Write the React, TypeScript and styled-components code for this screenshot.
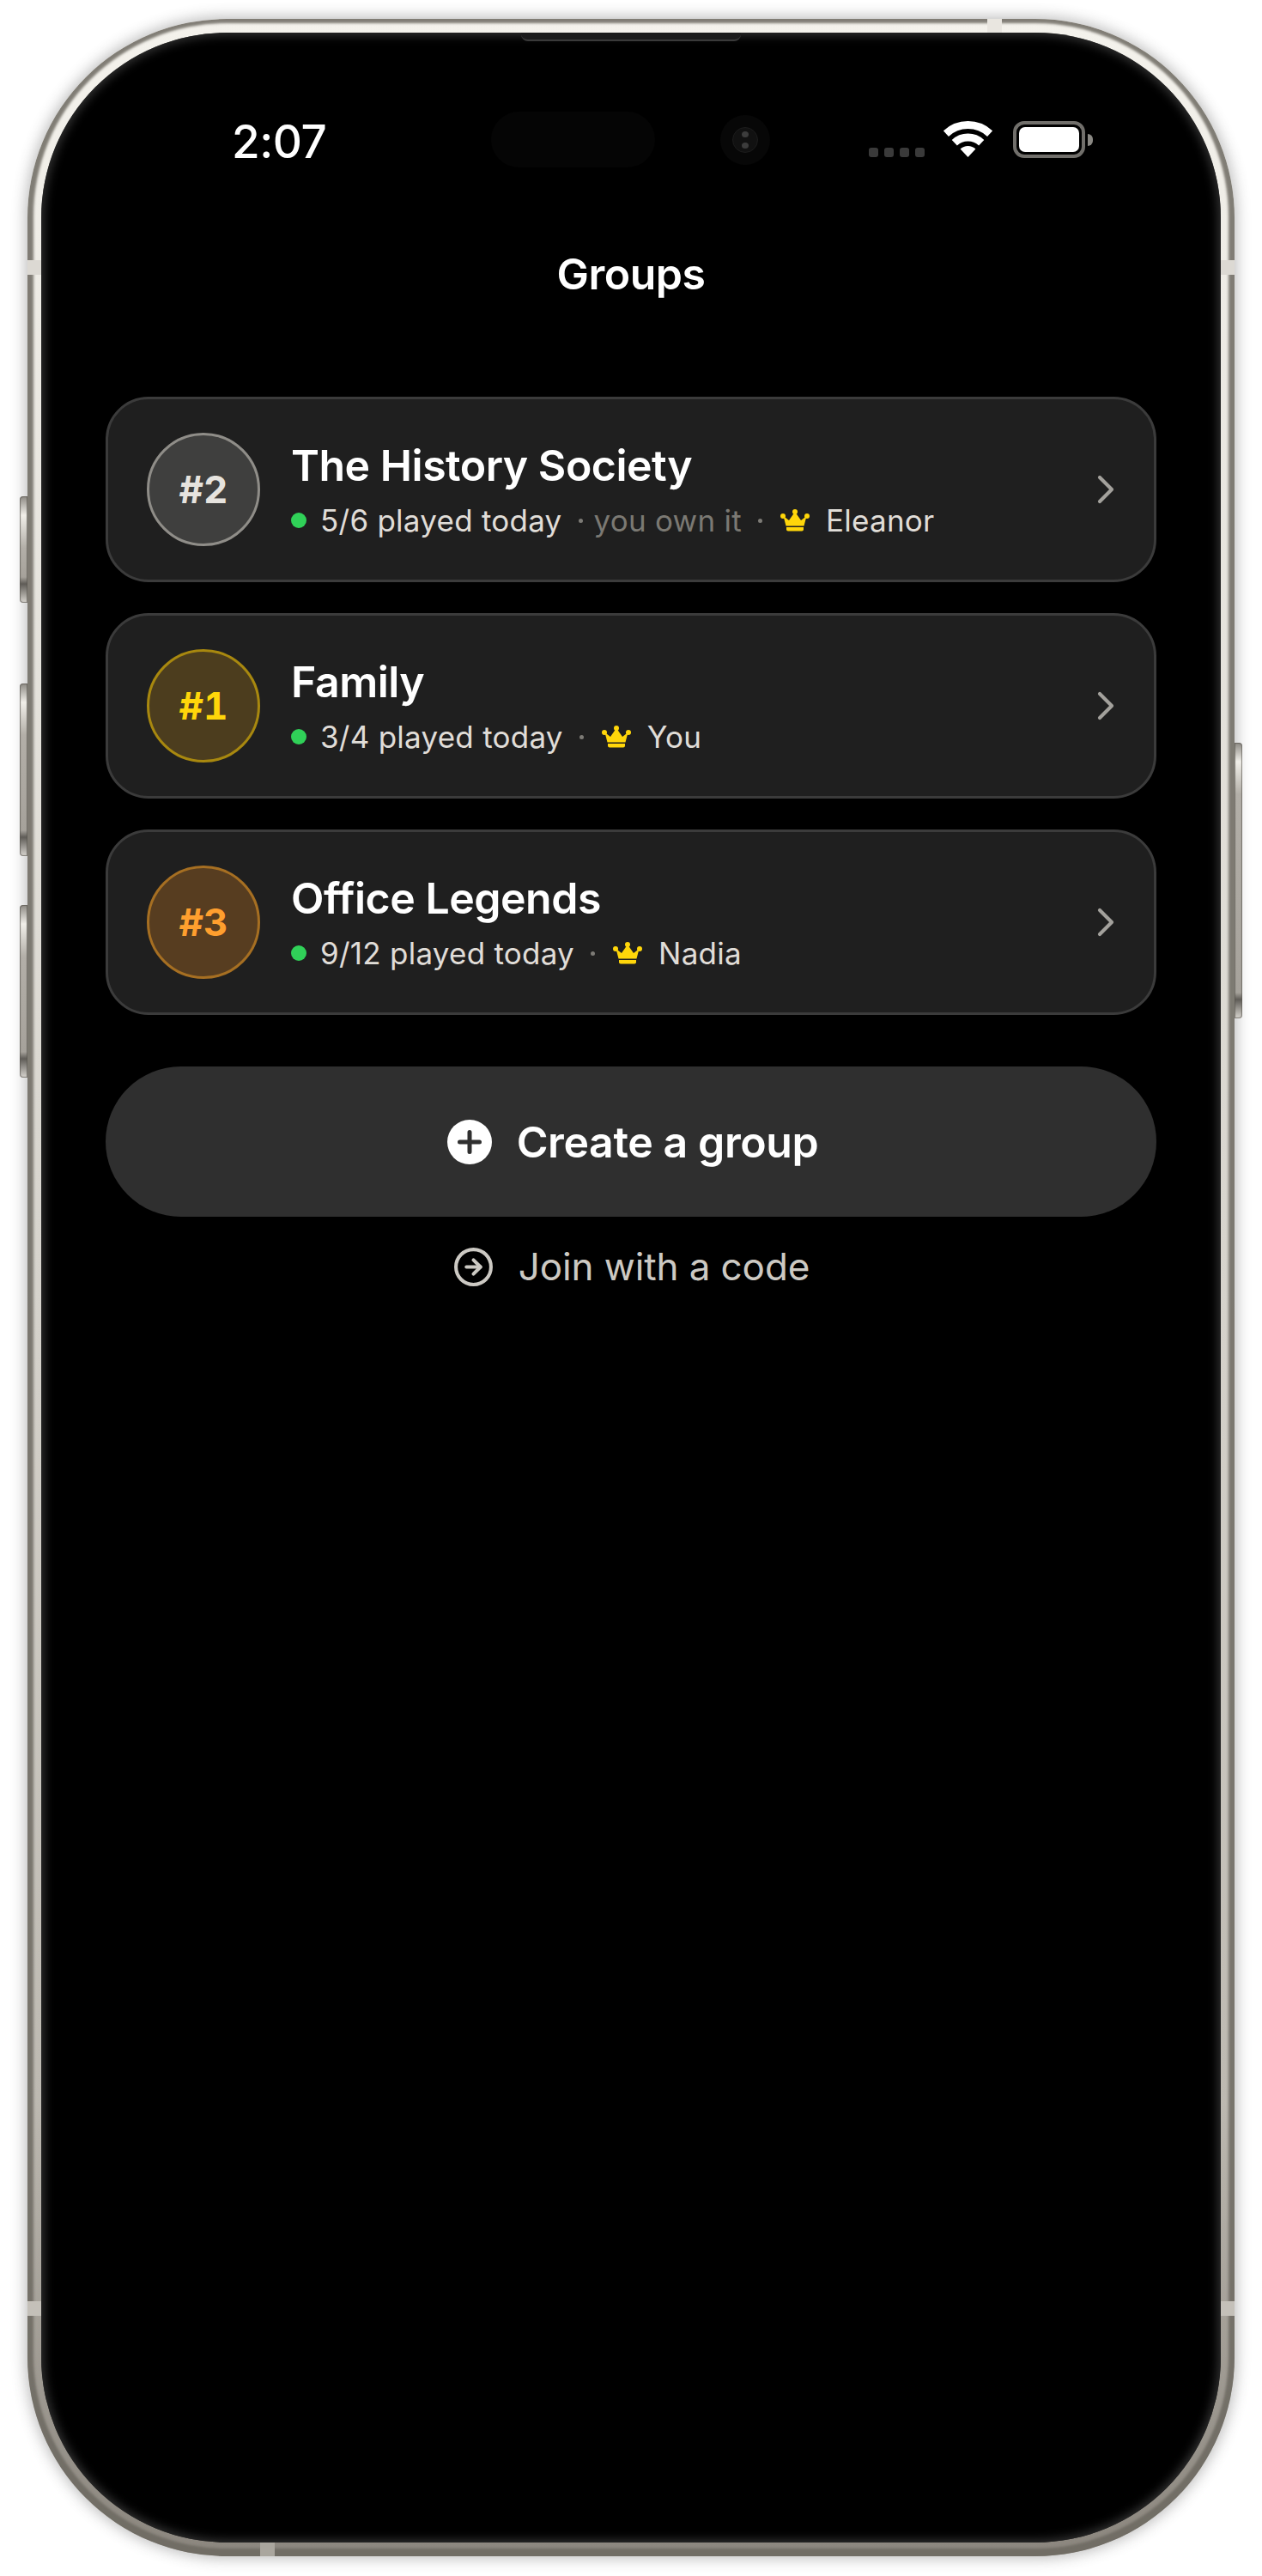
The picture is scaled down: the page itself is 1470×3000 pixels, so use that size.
import styled, { createGlobalStyle } from 'styled-components'
import { ChevronRight, CircleArrowRight } from 'lucide-react'

const GlobalStyle = createGlobalStyle`
  html, body {
    margin: 0;
    background: #fff;
  }
  * {
    box-sizing: border-box;
  }
`

const Page = styled.div`
  height: 3000px;
  padding: 22px 32px 0;
  font-family: 'Inter', 'Liberation Sans', sans-serif;
`

const Phone = styled.div`
  position: relative;
  width: 1406px;
  height: 2955px;
  padding: 16px;
  border-radius: 232px;
  background: linear-gradient(180deg, #f4f2ec 0%, #d6d3cc 50%, #bdb9b1 82%, #8b867e 100%);
  box-shadow:
    0 0 16px 3px rgba(60, 60, 60, 0.32),
    inset 0 -2px 3px 7px rgba(108, 104, 96, 0.85);
`

const SideButton = styled.div<{ $side: 'left' | 'right'; $top: number; $height: number }>`
  position: absolute;
  top: ${(p) => p.$top}px;
  height: ${(p) => p.$height}px;
  width: 9px;
  ${(p) => (p.$side === 'left' ? 'left: -9px;' : 'right: -9px;')}
  border-radius: ${(p) => (p.$side === 'left' ? '4px 0 0 4px' : '0 4px 4px 0')};
  background: linear-gradient(
    180deg,
    #8d8a84 0,
    #f1efe9 22px,
    #b3afa8 60px,
    #a6a29b calc(100% - 30px),
    #5f5c57 calc(100% - 22px),
    #d9d6d0 100%
  );
  box-shadow: inset 0 0 1px 1px rgba(90, 86, 80, 0.7);
`

const AntennaBand = styled.div<{ $edge: 'left' | 'right' | 'top' | 'bottom'; $at: number; $tone: string }>`
  position: absolute;
  background: ${(p) => p.$tone};
  ${(p) =>
    p.$edge === 'left' || p.$edge === 'right'
      ? `top: ${p.$at}px; width: 16px; height: 17px; ${p.$edge}: 0;`
      : `left: ${p.$at}px; height: 16px; width: 17px; ${p.$edge}: 0;`}
`

const Screen = styled.div`
  position: relative;
  height: 100%;
  border-radius: 216px;
  background: #000;
  overflow: hidden;
  box-shadow: inset 0 0 12px 3px #343434;
`

const Speaker = styled.div`
  position: absolute;
  top: 0;
  left: 559px;
  width: 256px;
  height: 10px;
  background: #1b1b1b;
  border-bottom: 2px solid #3a3a3a;
  border-radius: 0 0 8px 8px;
`

const StatusBar = styled.div`
  display: flex;
  align-items: flex-start;
  height: 165px;
  padding: 92px 0 0 222px;
`

const Time = styled.div`
  width: 302px;
  margin-top: 9px;
  font-size: 53px;
  line-height: 1;
  font-weight: 500;
  letter-spacing: -0.5px;
  color: #fff;
`

const Island = styled.div`
  width: 191px;
  height: 65px;
  border-radius: 33px;
  background: #050505;
`

const Camera = styled.div`
  display: flex;
  align-items: center;
  justify-content: center;
  width: 58px;
  height: 58px;
  margin: 4px 0 0 76px;
  border-radius: 50%;
  background: #070707;
`

const CameraLens = styled.div`
  display: flex;
  flex-direction: column;
  align-items: center;
  justify-content: center;
  gap: 6px;
  width: 30px;
  height: 30px;
  border-radius: 50%;
  background: #111;
  border: 1px solid #1c1c1c;
`

const LensDot = styled.div`
  width: 8px;
  height: 7px;
  border-radius: 50%;
  background: #3c3c3c;
`

const SignalDots = styled.div`
  display: flex;
  gap: 7px;
  margin: 42px 0 0 115px;
`

const SignalDot = styled.div`
  width: 11px;
  height: 11px;
  border-radius: 3px;
  background: #3a3a3a;
`

const WifiIcon = styled.svg`
  display: block;
  margin: 11px 0 0 22px;
`

const Battery = styled.div`
  display: flex;
  align-items: center;
  margin: 11px 0 0 24px;
`

const BatteryBody = styled.div`
  width: 84px;
  height: 43px;
  padding: 3px;
  border: 4px solid #716f6b;
  border-radius: 13px;
  background: #000;
`

const BatteryFill = styled.div`
  width: 100%;
  height: 100%;
  border-radius: 7px;
  background: #fff;
`

const BatteryCap = styled.div`
  width: 6px;
  height: 14px;
  margin-left: 3px;
  border-radius: 0 7px 7px 0;
  background: #8a8883;
`

const Title = styled.h1`
  margin: 0;
  height: 259px;
  padding-top: 86px;
  text-align: center;
  font-size: 50px;
  line-height: 60px;
  font-weight: 600;
  letter-spacing: -0.5px;
  color: #fff;
`

const Content = styled.div`
  display: flex;
  flex-direction: column;
  padding: 0 75px;
`

const GroupList = styled.div`
  display: flex;
  flex-direction: column;
  gap: 36px;
`

const GroupCard = styled.div`
  display: flex;
  align-items: center;
  height: 216px;
  padding: 0 45px;
  border: 3px solid #3b3b3b;
  border-radius: 50px;
  background: #1f1f1f;
`

const RANKS = {
  gold: { fill: '#4c3d1e', line: '#a8880f', text: '#ffd60a' },
  silver: { fill: '#3f3f3e', line: '#8f8d88', text: '#e6e3de' },
  bronze: { fill: '#573d20', line: '#a66f22', text: '#ff9f2e' },
}

type Rank = keyof typeof RANKS

const RankBadge = styled.div<{ $rank: Rank }>`
  display: flex;
  align-items: center;
  justify-content: center;
  flex: none;
  width: 132px;
  height: 132px;
  border-radius: 50%;
  border: 3px solid ${(p) => RANKS[p.$rank].line};
  background: ${(p) => RANKS[p.$rank].fill};
  color: ${(p) => RANKS[p.$rank].text};
  font-size: 44px;
  font-weight: 700;
  font-variant-numeric: tabular-nums;
`

const GroupInfo = styled.div`
  display: flex;
  flex-direction: column;
  flex: 1;
  gap: 12px;
  margin-left: 36px;
`

const GroupName = styled.div`
  font-size: 50px;
  line-height: 60px;
  font-weight: 600;
  letter-spacing: -0.5px;
  color: #fff;
`

const MetaRow = styled.div`
  display: flex;
  align-items: center;
  font-size: 35px;
  line-height: 44px;
  letter-spacing: 0.25px;
  color: #e0ddd8;
`

const LiveDot = styled.span`
  width: 18px;
  height: 18px;
  margin-right: 16px;
  border-radius: 50%;
  background: #30d158;
`

const Separator = styled.span`
  width: 5px;
  height: 5px;
  margin: 0 21px 0 19px;
  border-radius: 50%;
  background: #7d7b76;
`

const OwnNote = styled.span`
  margin-left: -8px;
  color: #7b7973;
`

const CrownIcon = styled.svg`
  display: block;
  flex: none;
  margin-right: 19px;
`

const Chevron = styled(ChevronRight)`
  flex: none;
  margin-right: -17px;
  color: #a3a19c;
`

const CreateButton = styled.button`
  display: flex;
  align-items: center;
  justify-content: center;
  gap: 29px;
  height: 175px;
  margin-top: 60px;
  padding: 0 0 0 4px;
  border: 0;
  border-radius: 88px;
  background: #2f2f2f;
  color: #fff;
  font-family: inherit;
  font-size: 50px;
  font-weight: 600;
  letter-spacing: -0.4px;
`

const JoinLink = styled.div`
  display: flex;
  align-items: center;
  justify-content: center;
  gap: 28px;
  height: 50px;
  margin-top: 33px;
  font-size: 44px;
  font-weight: 400;
  letter-spacing: -0.1px;
  color: #ccc9c3;
`

const groups: {
  name: string
  rank: Rank
  label: string
  played: string
  mine?: boolean
  owner: string
}[] = [
  { name: 'The History Society', rank: 'silver', label: '#2', played: '5/6 played today', mine: true, owner: 'Eleanor' },
  { name: 'Family', rank: 'gold', label: '#1', played: '3/4 played today', owner: 'You' },
  { name: 'Office Legends', rank: 'bronze', label: '#3', played: '9/12 played today', owner: 'Nadia' },
]

function Crown() {
  return (
    <CrownIcon width="34" height="26" viewBox="0 0 34 26" fill="#ffd60a">
      <circle cx="3" cy="8" r="3" />
      <circle cx="17" cy="3" r="3" />
      <circle cx="31" cy="8" r="3" />
      <path d="M3.5 8 10 13 17 3l7 10 6.5-5-3 11.5h-21z" />
      <path d="M7 21h20v2.500a2 2 0 0 1-2 2H9a2 2 0 0 1-2-2z" />
    </CrownIcon>
  )
}

function App() {
  return (
    <Page>
      <GlobalStyle />
      <Phone>
        <SideButton $side="left" $top={556} $height={124} />
        <SideButton $side="left" $top={774} $height={201} />
        <SideButton $side="left" $top={1032} $height={201} />
        <SideButton $side="right" $top={843} $height={321} />
        <AntennaBand $edge="left" $at={281} $tone="#dcd9d3" />
        <AntennaBand $edge="right" $at={281} $tone="#dcd9d3" />
        <AntennaBand $edge="left" $at={2658} $tone="#c4c0b9" />
        <AntennaBand $edge="right" $at={2658} $tone="#c4c0b9" />
        <AntennaBand $edge="top" $at={1118} $tone="#e9e6e0" />
        <AntennaBand $edge="bottom" $at={271} $tone="#aaa69e" />
        <Screen>
          <Speaker />
          <StatusBar>
            <Time>2:07</Time>
            <Island />
            <Camera>
              <CameraLens>
                <LensDot />
                <LensDot />
              </CameraLens>
            </Camera>
            <SignalDots>
              <SignalDot />
              <SignalDot />
              <SignalDot />
              <SignalDot />
            </SignalDots>
            <WifiIcon width="57" height="42" viewBox="0 0 57 42" fill="none" stroke="#fff" strokeWidth="9">
              <path d="M2.900 14.600a37.500 37.500 0 0 1 51.200 0" />
              <path d="M12.800 25.200a23 23 0 0 1 31.400 0" />
              <path d="M28.500 42 19.600 32.500a13 13 0 0 1 17.800 0z" fill="#fff" stroke="none" />
            </WifiIcon>
            <Battery>
              <BatteryBody>
                <BatteryFill />
              </BatteryBody>
              <BatteryCap />
            </Battery>
          </StatusBar>
          <Title>Groups</Title>
          <Content>
            <GroupList>
              {groups.map((group) => (
                <GroupCard key={group.name}>
                  <RankBadge $rank={group.rank}>{group.label}</RankBadge>
                  <GroupInfo>
                    <GroupName>{group.name}</GroupName>
                    <MetaRow>
                      <LiveDot />
                      {group.played}
                      <Separator />
                      {group.mine && (
                        <>
                          <OwnNote>you own it</OwnNote>
                          <Separator />
                        </>
                      )}
                      <Crown />
                      {group.owner}
                    </MetaRow>
                  </GroupInfo>
                  <Chevron size={56} strokeWidth={1.8} />
                </GroupCard>
              ))}
            </GroupList>
            <CreateButton>
              <svg width="52" height="52" viewBox="0 0 52 52">
                <circle cx="26" cy="26" r="26" fill="#fff" />
                <path d="M14.500 26h23M26 14.500v23" stroke="#2f2f2f" strokeWidth="5" strokeLinecap="round" />
              </svg>
              Create a group
            </CreateButton>
            <JoinLink>
              <CircleArrowRight size={49} strokeWidth={2} />
              Join with a code
            </JoinLink>
          </Content>
        </Screen>
      </Phone>
    </Page>
  )
}

export default App
